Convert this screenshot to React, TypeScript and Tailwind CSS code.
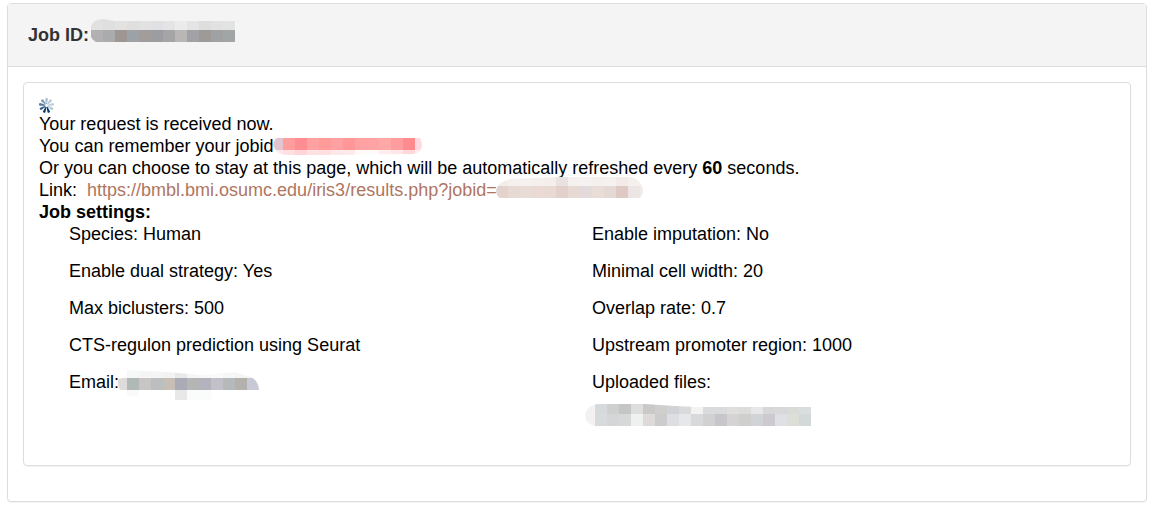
import { useId } from "react";

type Row = { y: number; h: number; x: number; colors: string[] };

const CELL = 12;

type MosaicProps = {
  label: string;
  width: number;
  outline: string;
  rows: Row[];
  className?: string;
};

/* A pixelated strip that hides a private value. */
function Mosaic({ label, width, outline, rows, className = "" }: MosaicProps) {
  const id = useId();
  return (
    <svg
      role="img"
      aria-label={label}
      width={width}
      height={22}
      className={`block shrink-0 overflow-visible ${className}`}
      shapeRendering="crispEdges"
    >
      <clipPath id={id}>
        <path d={outline} />
      </clipPath>
      <g clipPath={`url(#${id})`}>
        {rows.map((row) =>
          row.colors.map((color, i) => (
            <rect
              key={`${row.y}-${i}`}
              x={row.x + i * CELL}
              y={row.y}
              width={CELL}
              height={row.h}
              fill={color}
            />
          )),
        )}
      </g>
    </svg>
  );
}

const PETALS = ["#a9bccf", "#b9c9d8", "#c3d0dd", "#b5c5d5", "#0d3a6b", "#0d3a6b", "#3a6090", "#5578a0", "#7d99b8"];

function Spinner() {
  return (
    <svg role="img" aria-label="Loading" width={16} height={16} viewBox="0 0 16 16" className="block overflow-visible">
      {PETALS.map((color, i) => (
        <path
          key={i}
          d="M7.5 6.6 L6.7 1.4 Q6.7 0.4 8 0.4 Q9.3 0.4 9.3 1.4 L8.5 6.6 Z"
          fill={color}
          transform={`translate(-0.5 0.5) rotate(${i * 40} 8 8)`}
        />
      ))}
    </svg>
  );
}

export default function App() {
  return (
    <main className="pt-[3px] pr-[18px] pb-2 pl-[7px] font-['Liberation_Sans',Arial,sans-serif] text-[18px] leading-[22px] text-black">
      <section className="rounded border border-[#ddd] bg-white shadow-[0_1px_1px_rgba(0,0,0,0.05)]">
        <header className="flex border-b border-[#ddd] bg-[#f4f4f4] px-5 py-5 text-[#333]">
          <h1 className="font-bold">Job ID:</h1>
          <Mosaic
            label="Hidden job ID"
            width={146}
            outline="M1 7 Q2 -5 14 -5 L26 -3 H146 V18 H7 Q1 15 1 7 Z"
            rows={[
              { x: 2, y: -5, h: 11, colors: ["#e1e1e1", "#dfdfdf", "#e3e2e1", "#dfdfe0", "#e2e2e2", "#dfe1e4", "#e4e4e4", "#ebebeb", "#e4e4e4", "#dededc", "#e1e1e1", "#e2e4e4"] },
              { x: 2, y: 6, h: 12, colors: ["#b2b0b0", "#aaabac", "#9d9693", "#9da2a7", "#a29c9b", "#9c9da1", "#a5a5a6", "#b8b7b6", "#a1a2a5", "#9d9a98", "#a0a1a2", "#a1a5a6"] },
            ]}
          />
        </header>

        <div className="px-[15px] pt-[15px] pb-[35px]">
          <div className="rounded border border-[#ddd] px-[15px] pt-[14px] pb-[39px] shadow-[0_1px_1px_rgba(0,0,0,0.05)]">
            <Spinner />
            <p>Your request is received now.</p>
            <p className="flex">
              You can remember your jobid
              <Mosaic
                label="Hidden job ID"
                width={149}
                outline="M0 10 Q2 0 9 3 H147 Q151 10 147 16 Q142 20 134 19 L60 20 H15 Q3 20 0 10 Z"
                rows={[
                  { x: -2, y: -2, h: 5, colors: ["#f5f3f8"] },
                  { x: -2, y: 3, h: 12, colors: ["#e2c5d0", "#ff9c9e", "#ff8d91", "#ffa0a3", "#ff9b99", "#ffa1a3", "#ff9697", "#ffa0a2", "#ffa3a4", "#ffa8a6", "#ff9c9f", "#ff8b8e", "#ffd9dd"] },
                  { x: -2, y: 15, h: 6, colors: ["#fce5eb", "#ffdfe1", "#ffd5d9", "#ffe3e4", "#ffdfe0", "#ffe8e9", "#ffeaeb", "#fffafa", "#fffafa", "#ffeeef", "#ffe7e8", "#ffd8dc", "#ffe9ec"] },
                ]}
              />
            </p>
            <p>
              Or you can choose to stay at this page, which will be automatically refreshed every <b>60</b> seconds.
            </p>
            <p className="flex">
              <span className="mr-[10px]">Link:</span>
              <a href="https://bmbl.bmi.osumc.edu/iris3/results.php" className="flex text-[#b07561]">
                https://bmbl.bmi.osumc.edu/iris3/results.php?jobid=
                <Mosaic
                  label="Hidden job ID"
                  width={146}
                  outline="M-1 12 Q0 3 14 0 L60 -2 H132 Q145 0 146 12 Q146 17 142 19 H3 Q0 18 -1 12 Z"
                  rows={[
                    { x: -1, y: -2, h: 9, colors: ["#f3ece9", "#f5efed", "#f6f1ef", "#f5f0ee", "#f4efed", "#e9e2e0", "#f5f1f0", "#f6f2f1", "#f5f0ee", "#f6f2f0", "#f2ebe9", "#f5efed", "#f5f0ee"] },
                    { x: -1, y: 7, h: 12, colors: ["#e4d2cd", "#e7d9d3", "#e8dcd7", "#ead9d4", "#e8d9d2", "#e3d0cc", "#e7dad5", "#e3dadb", "#e9ddd8", "#e5d9d5", "#dfc9c4", "#ede5e3", "#f0eae8"] },
                  ]}
                />
              </a>
            </p>
            <h2 className="font-bold">Job settings:</h2>
            <ul className="grid grid-cols-2 gap-y-[15px] pl-[30px]">
              <li>Species: Human</li>
              <li>Enable imputation: No</li>
              <li>Enable dual strategy: Yes</li>
              <li>Minimal cell width: 20</li>
              <li>Max biclusters: 500</li>
              <li>Overlap rate: 0.7</li>
              <li>CTS-regulon prediction using Seurat</li>
              <li>Upstream promoter region: 1000</li>
              <li className="flex">
                Email:
                <Mosaic
                  label="Hidden email address"
                  width={140}
                  outline="M-1 8 L8 6 V-1 L48 1 L82 4 L115 1 L128 5 Q139 7 140 19 H98 V29 H56 V19 H20 V25 H8 V19 H1 Q-2 14 -1 8 Z"
                  rows={[
                    { x: -4, y: -2, h: 9, colors: ["#fafafa", "#f6f7f7", "#f5f5f5", "#f5f5f5", "#f4f3f3", "#e9e9ea", "#f5f5f5", "#f9f9f9", "#fafafa", "#f7f7f7", "#f4f4f4", "#f3f3f5"] },
                    { x: -4, y: 7, h: 12, colors: ["#dedcdb", "#b0b9b5", "#c8c5c4", "#bcbfc0", "#c7beb8", "#a9acb4", "#b5b5b4", "#b2b3bc", "#c2c0c9", "#b5b9ba", "#b4b0ac", "#c7c9d7"] },
                    { x: -4, y: 19, h: 10, colors: ["#ffffff", "#fafafa", "#ffffff", "#ffffff", "#ffffff", "#e8e8e8", "#fafbfb", "#fbfbfb"] },
                  ]}
                />
              </li>
              <li>
                Uploaded files:
                <Mosaic
                  label="Hidden file name"
                  width={219}
                  className="mt-[11px]"
                  outline="M-7 12 Q-6 2 5 0 H53 L83 2 L107 3 H219 V22 H3 Q-6 20 -7 12 Z"
                  rows={[
                    { x: -9, y: 0, h: 10, colors: ["#f3f2f0", "#d7dadc", "#cecfcf", "#c3c6c5", "#dededd", "#cbc9c7", "#d0cfce", "#cfd3d7", "#d9dada", "#f4f3f1", "#dadbdc", "#d9dbdd", "#dfdeda", "#dcdddb", "#e7e7e9", "#d7d7d8", "#d8d8da", "#d9dbd7", "#dadddd"] },
                    { x: -9, y: 10, h: 12, colors: ["#f3f2f0", "#d7dbdc", "#d4d6d7", "#d9d8d8", "#eff0f0", "#dedad9", "#cccccc", "#dcdee1", "#e7e7e9", "#d8d9da", "#d1d1d2", "#c8c6ca", "#d4d4d3", "#cfcfcd", "#d1d4d6", "#cccad0", "#dfe0e3", "#dcded8", "#d3d8d9"] },
                  ]}
                />
              </li>
            </ul>
          </div>
        </div>
      </section>
    </main>
  );
}
